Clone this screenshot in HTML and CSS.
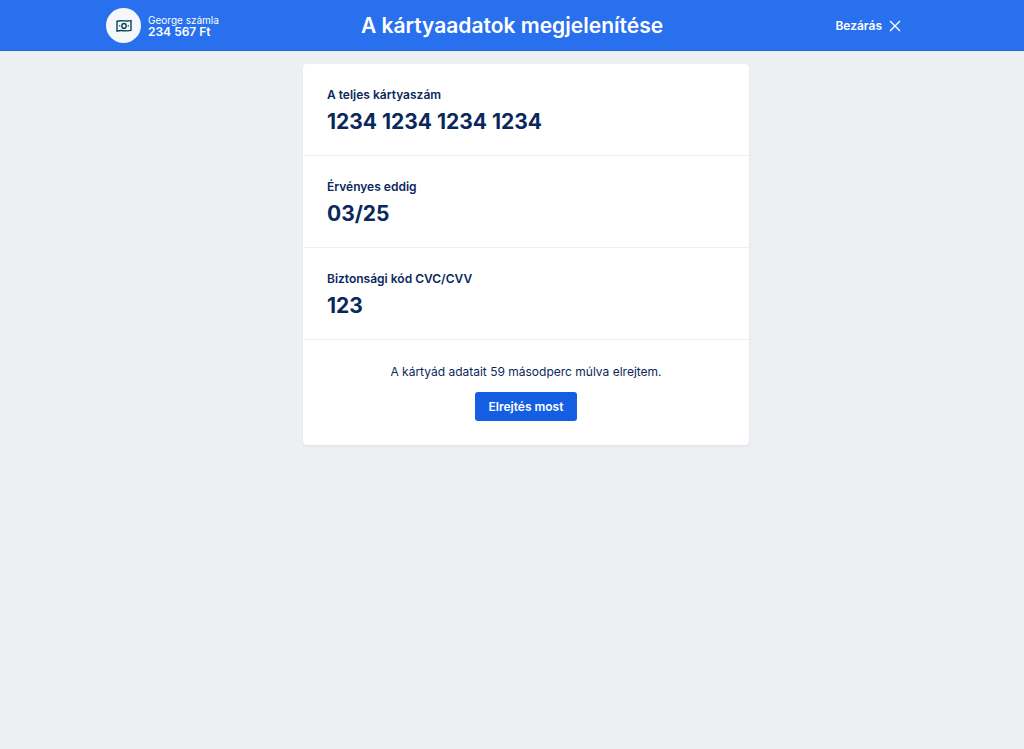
FILE: index.html
```html
<!DOCTYPE html>
<html lang="hu">
  <head>
    <meta charset="UTF-8" />
    <meta name="viewport" content="width=device-width, initial-scale=1.0" />
    <title>A kártyaadatok megjelenítése</title>
    <link rel="stylesheet" href="styles.css">
  </head>
  <body>
    <header class="header">
      <div class="account">
        <span class="account-icon">
          <svg width="16" height="14" viewBox="0 0 16 14" fill="none" stroke="#0e4255" stroke-width="1.4" aria-hidden="true">
            <path d="M1 2.200C3.400 1.600 5.600 1.700 8 1.900s4.600.3 7-.3v9.800c-2.400.6-4.600.5-7 .3s-4.600-.3-7 .3z" />
            <ellipse cx="8" cy="6.900" rx="2.200" ry="2.400" />
            <path d="M3 6.900h1.300M11.700 6.900H13" />
          </svg>
        </span>
        <div class="account-text">
          <div class="account-name">George számla</div>
          <div class="account-balance">234 567 Ft</div>
        </div>
      </div>

      <h1>A kártyaadatok megjelenítése</h1>

      <button class="close-btn" type="button">
        Bezárás
        <svg width="12" height="12" viewBox="0 0 12 12" fill="none" stroke="currentColor" stroke-width="1.4" aria-hidden="true">
          <path d="M1 1l10 10M11 1L1 11" />
        </svg>
      </button>
    </header>

    <main class="content">
      <section class="card">
        <dl class="card-details">
          <div class="detail">
            <dt>A teljes kártyaszám</dt>
            <dd>1234 1234 1234 1234</dd>
          </div>
          <div class="detail">
            <dt>Érvényes eddig</dt>
            <dd>03/25</dd>
          </div>
          <div class="detail">
            <dt>Biztonsági kód CVC/CVV</dt>
            <dd>123</dd>
          </div>
        </dl>

        <div class="card-footer">
          <p>A kártyád adatait 59 másodperc múlva elrejtem.</p>
          <button class="hide-btn" type="button">Elrejtés most</button>
        </div>
      </section>
    </main>
  </body>
</html>
```

FILE: styles.css
```css
* {
  margin: 0;
  padding: 0;
  box-sizing: border-box;
}

body {
  font-family: 'Inter', sans-serif;
  font-size: 12px;
  line-height: 20px;
  background: #edeff3;
  color: #0a285c;
  min-height: 100vh;
}

button {
  font: inherit;
  font-weight: 600;
  color: white;
  border: none;
  cursor: pointer;
}

.header {
  display: grid;
  grid-template-columns: 1fr auto 1fr;
  align-items: center;
  padding: 8px 106px 7px;
  background: #2870ed;
  border-bottom: 1px solid #2468d8;
  color: white;
}

.account {
  display: flex;
  align-items: center;
  gap: 7px;
}

.account-icon {
  display: flex;
  align-items: center;
  justify-content: center;
  width: 35px;
  height: 35px;
  border-radius: 50%;
  background: #f4f8fb;
}

.account-text {
  line-height: 12px;
}

.account-name {
  font-size: 10px;
}

.account-balance {
  font-weight: 600;
}

h1 {
  font-size: 21px;
  line-height: 28px;
  font-weight: 600;
}

.close-btn {
  justify-self: end;
  display: flex;
  align-items: center;
  gap: 7px;
  padding: 0 17px;
  background: none;
}

.content {
  padding: 13px 0 24px 28px;
}

.card {
  max-width: 446px;
  margin: 0 auto;
  background: white;
  border-radius: 4px;
  box-shadow: 0 1px 2px rgba(10, 40, 92, 0.08);
}

.detail {
  padding: 21px 24px 17px;
  border-bottom: 1px solid #edeff3;
}

dt {
  font-weight: 600;
}

dd {
  font-size: 21px;
  line-height: 33px;
  font-weight: 700;
}

.card-footer {
  display: flex;
  flex-direction: column;
  align-items: center;
  gap: 10px;
  padding: 22px 24px 24px;
}

.hide-btn {
  height: 29px;
  padding: 0 14px;
  border-radius: 3px;
  background: #135ee2;
}
```
